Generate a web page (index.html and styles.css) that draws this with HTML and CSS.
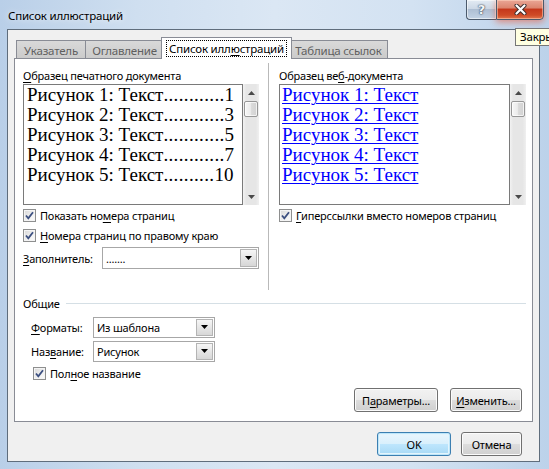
FILE: index.html
```html
<!DOCTYPE html>
<html lang="ru">
<head>
<meta charset="utf-8">
<title>Список иллюстраций</title>
<link rel="stylesheet" href="styles.css">
</head>
<body>
<div class="window">
  <div class="titlebar"><span class="title">Список иллюстраций</span></div>
  <div class="caption-buttons">
    <div class="cbtn help">?</div>
    <div class="cbtn close">
      <svg width="13" height="11" viewBox="0 0 13 11"><path d="M2.5 1.5 L10.5 9.5 M10.5 1.5 L2.5 9.5" stroke="#3a2a2a" stroke-width="4" stroke-linecap="round"/><path d="M2.5 1.5 L10.5 9.5 M10.5 1.5 L2.5 9.5" stroke="#ffffff" stroke-width="2.2" stroke-linecap="round"/></svg>
    </div>
  </div>
  <div class="tooltip">Закрыть</div>

  <div class="client">
    <div class="tabs">
      <div class="tab t1">Указатель</div>
      <div class="tab t2">Оглавление</div>
      <div class="tab t3 active"><span class="focus">Список илл<u>ю</u>страций</span></div>
      <div class="tab t4">Таблица ссылок</div>
    </div>

    <div class="panel">
      <div class="upper">
        <div class="col left">
          <div class="label"><u>О</u>бразец печатного документа</div>
          <div class="preview">
            <div class="listbox print">
              <div class="entry"><span class="name">Рисунок 1: Текст</span><span class="leader">............</span><span class="num">1</span></div>
              <div class="entry"><span class="name">Рисунок 2: Текст</span><span class="leader">............</span><span class="num">3</span></div>
              <div class="entry"><span class="name">Рисунок 3: Текст</span><span class="leader">............</span><span class="num">5</span></div>
              <div class="entry"><span class="name">Рисунок 4: Текст</span><span class="leader">............</span><span class="num">7</span></div>
              <div class="entry"><span class="name">Рисунок 5: Текст</span><span class="leader">..........</span><span class="num">10</span></div>
            </div>
            <div class="sb">
              <div class="sb-arrow"><svg width="7" height="4" viewBox="0 0 7 4"><path d="M0 4 L3.5 0 L7 4 Z" fill="#4a4a4a"/></svg></div>
              <div class="sb-thumb"></div>
              <div class="sb-track"></div>
              <div class="sb-arrow"><svg width="7" height="4" viewBox="0 0 7 4"><path d="M0 0 L3.5 4 L7 0 Z" fill="#4a4a4a"/></svg></div>
            </div>
          </div>
          <div class="check c1"><span class="box"><svg width="11" height="11" viewBox="0 0 11 11"><path d="M2 5.5 L4.3 8.3 L9 2.2" fill="none" stroke="#3b4f80" stroke-width="1.8"/></svg></span><span>Показать но<u>м</u>ера страниц</span></div>
          <div class="check c2"><span class="box"><svg width="11" height="11" viewBox="0 0 11 11"><path d="M2 5.5 L4.3 8.3 L9 2.2" fill="none" stroke="#3b4f80" stroke-width="1.8"/></svg></span><span><u>Н</u>омера страниц по правому краю</span></div>
          <div class="field fill">
            <span class="flabel"><u>З</u>аполнитель:</span>
            <div class="combo w-fill"><span class="cval">.......</span><span class="drop"><svg width="7" height="4" viewBox="0 0 7 4"><path d="M0 0 L3.5 4 L7 0 Z" fill="#000"/></svg></span></div>
          </div>
        </div>
        <div class="vsep"></div>
        <div class="col right">
          <div class="label">Образец ве<u>б</u>-документа</div>
          <div class="preview">
            <div class="listbox web">
              <div class="entry"><span class="link">Рисунок 1: Текст</span></div>
              <div class="entry"><span class="link">Рисунок 2: Текст</span></div>
              <div class="entry"><span class="link">Рисунок 3: Текст</span></div>
              <div class="entry"><span class="link">Рисунок 4: Текст</span></div>
              <div class="entry"><span class="link">Рисунок 5: Текст</span></div>
            </div>
            <div class="sb">
              <div class="sb-arrow"><svg width="7" height="4" viewBox="0 0 7 4"><path d="M0 4 L3.5 0 L7 4 Z" fill="#4a4a4a"/></svg></div>
              <div class="sb-thumb"></div>
              <div class="sb-track"></div>
              <div class="sb-arrow"><svg width="7" height="4" viewBox="0 0 7 4"><path d="M0 0 L3.5 4 L7 0 Z" fill="#4a4a4a"/></svg></div>
            </div>
          </div>
          <div class="check c1"><span class="box"><svg width="11" height="11" viewBox="0 0 11 11"><path d="M2 5.5 L4.3 8.3 L9 2.2" fill="none" stroke="#3b4f80" stroke-width="1.8"/></svg></span><span><u>Г</u>иперссылки вместо номеров страниц</span></div>
        </div>
      </div>

      <div class="group">
        <div class="group-title"><span>Общие</span><span class="gline"></span></div>
        <div class="field row1">
          <span class="flabel glabel"><u>Ф</u>орматы:</span>
          <div class="combo w-gen"><span class="cval">Из шаблона</span><span class="drop"><svg width="7" height="4" viewBox="0 0 7 4"><path d="M0 0 L3.5 4 L7 0 Z" fill="#000"/></svg></span></div>
        </div>
        <div class="field row2">
          <span class="flabel glabel">Наз<u>в</u>ание:</span>
          <div class="combo w-gen"><span class="cval">Рисунок</span><span class="drop"><svg width="7" height="4" viewBox="0 0 7 4"><path d="M0 0 L3.5 4 L7 0 Z" fill="#000"/></svg></span></div>
        </div>
        <div class="check c3"><span class="box"><svg width="11" height="11" viewBox="0 0 11 11"><path d="M2 5.5 L4.3 8.3 L9 2.2" fill="none" stroke="#3b4f80" stroke-width="1.8"/></svg></span><span>Пол<u>н</u>ое название</span></div>
        <div class="btnrow">
          <div class="btn b-params">П<u>а</u>раметры...</div>
          <div class="btn b-edit"><u>И</u>зменить...</div>
        </div>
      </div>
    </div>

    <div class="footer">
      <div class="btn b-ok default">OK</div>
      <div class="btn b-cancel">Отмена</div>
    </div>
  </div>
</div>
</body>
</html>
```

FILE: styles.css
```css
* { box-sizing: border-box; }
html, body { margin: 0; padding: 0; }
body {
  width: 549px;
  height: 469px;
  overflow: hidden;
  font-family: "Segoe UI", "Noto Sans", "DejaVu Sans", sans-serif;
  font-size: 11px;
  letter-spacing: -0.2px;
  color: #000;
  background: #c3d7ed;
}
u { text-decoration: underline; text-underline-offset: 2px; }

.window {
  position: relative;
  width: 549px;
  height: 469px;
  display: flex;
  flex-direction: column;
  background: linear-gradient(90deg, #b9cfe8 0%, #cfdff0 25%, #dbe7f4 50%, #d3e2f2 75%, #bcd2ea 100%);
}
.titlebar {
  height: 29px;
  flex: none;
  display: flex;
  align-items: center;
  padding: 2px 0 0 8px;
}
.title { font-size: 11.5px; text-shadow: 0 0 6px rgba(255,255,255,0.9); }

.caption-buttons {
  position: absolute;
  top: -1px;
  left: 466px;
  display: flex;
}
.cbtn {
  height: 21px;
  display: flex;
  align-items: center;
  justify-content: center;
  border: 1px solid #4b5a6c;
  box-shadow: inset 0 0 0 1px rgba(255,255,255,0.55);
}
.help {
  width: 30px;
  border-right: none;
  border-radius: 0 0 0 4px;
  background: linear-gradient(#e3ebf3 0%, #cdd9e6 45%, #aebfd3 50%, #c3d3e5 100%);
  color: #f4f6f8;
  font-family: "DejaVu Sans", sans-serif;
  font-weight: bold;
  font-size: 13px;
  letter-spacing: 0;
  text-shadow: 0 0 1px #2c3a4c, 0 0 2px #2c3a4c;
}
.close {
  width: 48px;
  border-radius: 0 0 4px 0;
  background: linear-gradient(#eaa696 0%, #dc8670 40%, #c5381c 50%, #cf4b27 80%, #e2774f 100%);
  box-shadow: inset 0 0 0 1px rgba(255,220,200,0.5), 0 2px 7px rgba(240,70,30,0.55);
}

.tooltip {
  position: absolute;
  left: 515px;
  top: 28px;
  height: 18px;
  padding: 0 4px;
  border: 1px solid #767676;
  background: #ffffe1;
  font-size: 11.5px;
  line-height: 16px;
  white-space: nowrap;
  z-index: 5;
}

.client {
  flex: 1;
  margin: 0 9px 7px 7px;
  border: 1px solid #5f6d7c;
  background: #f0f0f0;
  display: flex;
  flex-direction: column;
}

.tabs {
  height: 28px;
  flex: none;
  display: flex;
  align-items: flex-end;
  padding: 0 0 0 8px;
}
.tab {
  height: 18px;
  border: 1px solid #898c95;
  border-bottom: none;
  background: linear-gradient(#d9d9d9, #cbcbcb);
  color: #5f5f5f;
  display: flex;
  align-items: center;
  justify-content: center;
  white-space: nowrap;
  padding-top: 1px;
  font-size: 11.5px;
}
.t1 { width: 70px; }
.t2 { width: 79px; margin-left: -1px; }
.t3 { width: 131px; margin-left: -3px; }
.t4 { width: 99px; margin-left: -3px; }
.tab.active {
  position: relative;
  z-index: 2;
  height: 22px;
  margin-bottom: -1px;
  background: #fff;
  color: #000;
  padding-top: 0;
}
.focus {
  border: 1px dotted #000;
  padding: 0 2px;
  line-height: 15px;
}

.panel {
  flex: none;
  height: 364px;
  margin: 0 6px;
  border: 1px solid #898c95;
  background: #fff;
  display: flex;
  flex-direction: column;
  padding: 4px 6px 0 8px;
}
.upper { display: flex; height: 227px; flex: none; }
.col { display: flex; flex-direction: column; padding-top: 5px; }
.col.left { width: 236px; }
.col.right { width: 247px; }
.vsep { width: 1px; background: #b9b9b9; margin: 0 10px 0 9px; }

.label { height: 15px; line-height: 15px; margin-bottom: 1px; white-space: nowrap; }

.preview { display: flex; height: 121px; flex: none; }
.listbox {
  flex: 1;
  border: 1px solid #7a7a7a;
  background: #fff;
  font-family: "Liberation Serif", "Times New Roman", serif;
  font-size: 19px;
  letter-spacing: 0;
  line-height: 20px;
  overflow: hidden;
}
.listbox.print { padding: 0 10px 0 3px; }
.listbox.web { padding: 0 0 0 2px; }
.entry { display: flex; white-space: nowrap; height: 20px; }
.leader { flex: none; letter-spacing: 0.35px; }
.num { margin-left: auto; }
.link { color: #0000ff; text-decoration: underline; text-underline-offset: 2px; text-decoration-thickness: 1px; }

.sb {
  width: 16px;
  flex: none;
  background: linear-gradient(90deg, #f2f2f2, #e6e6e6 20%, #e6e6e6 80%, #f0f0f0);
  display: flex;
  flex-direction: column;
  align-items: center;
}
.sb-arrow { height: 17px; width: 16px; display: flex; align-items: center; justify-content: center; flex: none; }
.sb-thumb {
  width: 14px;
  height: 16px;
  flex: none;
  border: 1px solid #979797;
  border-radius: 2px;
  background: linear-gradient(90deg, #f7f7f7, #ececec 45%, #dadada 55%, #d2d2d2);
  box-shadow: inset 0 0 0 1px rgba(255,255,255,0.7);
}
.sb-track { flex: 1; }

.check { display: flex; align-items: center; height: 15px; gap: 4px; white-space: nowrap; }
.col .c1 { margin-top: 3px; }
.col .c2 { margin-top: 5px; }
.box {
  width: 13px;
  height: 13px;
  flex: none;
  border: 1px solid #8e8f8f;
  background: linear-gradient(135deg, #d8d8d8, #f4f4f4 70%, #fafafa);
  box-shadow: inset 0 0 0 1px #f4f4f4;
  display: flex;
  align-items: center;
  justify-content: center;
}

.field { display: flex; align-items: center; height: 22px; }
.fill { margin-top: 4px; }
.flabel { white-space: nowrap; }
.fill .flabel { width: 79px; }
.combo {
  height: 22px;
  border: 1px solid #a7a7a7;
  background: #fff;
  display: flex;
  align-items: center;
  padding: 1px 1px 1px 3px;
}
.w-fill { width: 157px; }
.w-gen { width: 122px; height: 21px; }
.cval { flex: 1; white-space: nowrap; }
.drop {
  width: 17px;
  height: 100%;
  flex: none;
  border: 1px solid #b4b4b4;
  background: linear-gradient(#f6f6f6, #e6e6e6 50%, #d7d7d7);
  display: flex;
  align-items: center;
  justify-content: center;
}

.group { display: flex; flex-direction: column; }
.group-title { display: flex; align-items: center; height: 15px; margin-top: 6px; }
.gline { flex: 1; height: 1px; background: #d5dfe5; margin-left: 6px; }
.row1 { margin-top: 5px; padding-left: 8px; }
.row2 { margin-top: 2px; padding-left: 8px; }
.glabel { width: 62px; }
.c3 { margin-top: 4px; padding-left: 10px; }

.btnrow { display: flex; justify-content: flex-end; gap: 12px; margin-top: 7px; padding-right: 4px; }
.btn {
  height: 24px;
  border: 1px solid #707070;
  border-radius: 3px;
  background: linear-gradient(#f2f2f2 0%, #ebebeb 49%, #dddddd 50%, #cfcfcf 100%);
  box-shadow: inset 0 0 0 1px #fbfbfb;
  display: flex;
  align-items: center;
  justify-content: center;
  white-space: nowrap;
}
.b-params { width: 84px; }
.b-edit { width: 72px; }

.footer { display: flex; justify-content: flex-end; gap: 10px; margin-top: 10px; padding-right: 17px; }
.b-ok { width: 74px; }
.b-cancel { width: 61px; }
.btn.default {
  border-color: #3c7fb1;
  box-shadow: inset 0 0 0 1px #bde6fa, inset 0 0 0 2px #e3f4fc;
  background: linear-gradient(#eaf6fd 0%, #d9f0fc 49%, #bee6fd 50%, #a7d9f5 100%);
}
```
